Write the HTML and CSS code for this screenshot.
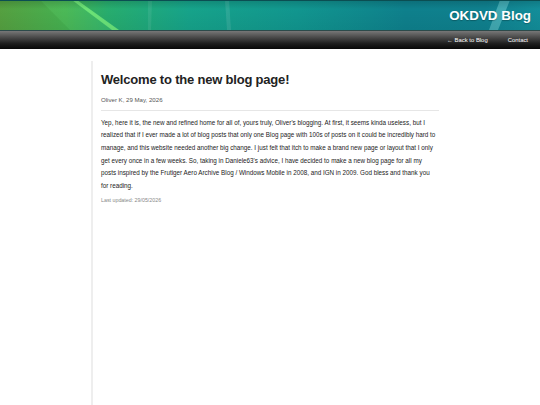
FILE: index.html
```html
<!DOCTYPE html>
<html lang="en">
<head>
    <meta charset="UTF-8">
    <meta name="viewport" content="width=device-width, initial-scale=1.0">
    <title>OKDVD Blog - Welcome to the new blog page!</title>
    <link rel="stylesheet" href="styles.css">
</head>
<body>
    <header class="masthead">
        <svg class="masthead-bg" viewBox="0 0 540 30" preserveAspectRatio="none" aria-hidden="true">
            <defs>
                <linearGradient id="sky" x1="0" y1="0" x2="1" y2="0">
                    <stop offset="0" stop-color="#55a040"/>
                    <stop offset="0.12" stop-color="#45b050"/>
                    <stop offset="0.2" stop-color="#27ad6e"/>
                    <stop offset="0.35" stop-color="#16a38a"/>
                    <stop offset="0.55" stop-color="#11968f"/>
                    <stop offset="0.75" stop-color="#0e808c"/>
                    <stop offset="0.9" stop-color="#0f808e"/>
                    <stop offset="1" stop-color="#138e9a"/>
                </linearGradient>
                <linearGradient id="shade" x1="0" y1="0" x2="0" y2="1">
                    <stop offset="0" stop-color="#000" stop-opacity="0.15"/>
                    <stop offset="0.3" stop-color="#000" stop-opacity="0"/>
                    <stop offset="1" stop-color="#000" stop-opacity="0.05"/>
                </linearGradient>
            </defs>
            <rect width="540" height="30" fill="url(#sky)"/>
            <polygon points="40,0 74,0 118,30 70,30" fill="#5fd26a" opacity="0.25"/>
            <polygon points="72,0 77,0 119,30 112,30" fill="#7cf27e" opacity="0.75"/>
            <polygon points="148,0 152,0 151,30 148,30" fill="#ffffff" opacity="0.08"/>
            <polygon points="225,0 229,0 231,30 227,30" fill="#ffffff" opacity="0.1"/>
            <polygon points="500,0 510,0 498,30 489,30" fill="#9ef0f0" opacity="0.35"/>
            <rect width="540" height="30" fill="url(#shade)"/>
            <rect width="540" height="1" fill="#0b4e52"/>
        </svg>
        <h1 class="site-title">OKDVD Blog</h1>
    </header>

    <nav class="topnav">
        <a href="#">&larr; Back to Blog</a>
        <a href="#">Contact</a>
    </nav>

    <main class="post">
        <h2 class="post-title">Welcome to the new blog page!</h2>
        <p class="post-meta">Oliver K, 29 May, 2026</p>
        <p class="post-body">Yep, here it is, the new and refined home for all of, yours truly, Oliver's blogging. At first, it seems kinda useless, but I realized that if I ever made a lot of blog posts that only one Blog page with 100s of posts on it could be incredibly hard to manage, and this website needed another big change. I just felt that itch to make a brand new page or layout that I only get every once in a few weeks. So, taking in Daniele63's advice, I have decided to make a new blog page for all my posts inspired by the Frutiger Aero Archive Blog / Windows Mobile in 2008, and IGN in 2009. God bless and thank you for reading.</p>
        <p class="post-updated">Last updated: 29/05/2026</p>
    </main>
</body>
</html>
```

FILE: styles.css
```css
* {
    margin: 0;
    padding: 0;
    box-sizing: border-box;
}

html, body {
    height: 100%;
}

body {
    font-family: 'Liberation Sans', Arial, Helvetica, sans-serif;
    background: #fff;
    color: #222;
    display: flex;
    flex-direction: column;
}

.masthead {
    position: relative;
    height: 30px;
    display: flex;
    justify-content: flex-end;
    align-items: center;
    padding-right: 9px;
    overflow: hidden;
}

.masthead-bg {
    position: absolute;
    top: 0;
    left: 0;
    width: 100%;
    height: 100%;
}

.site-title {
    position: relative;
    color: #fff;
    font-size: 13.4px;
    font-weight: bold;
    text-shadow: 0 1px 1px rgba(0, 0, 0, 0.25);
}

.topnav {
    height: 19px;
    background: linear-gradient(#777 0%, #4a4a4a 35%, #1e1e1e 70%, #080808 100%);
    border-top: 1px solid #2c4a4a;
    display: flex;
    justify-content: flex-end;
    align-items: center;
    gap: 20px;
    padding-right: 12px;
}

.topnav a {
    color: #fff;
    text-decoration: none;
    font-size: 5.9px;
}

.post {
    flex: 1;
    width: 358px;
    margin: 12px auto 0;
    border-left: 2px solid #eee;
    padding: 0 12px 0 8px;
}

.post-title {
    font-size: 13px;
    letter-spacing: -0.2px;
    font-weight: bold;
    color: #222;
    margin-top: 10px;
    line-height: 18px;
}

.post-meta {
    font-size: 6.1px;
    color: #555;
    margin-top: 7px;
    padding-bottom: 6.5px;
    border-bottom: 1px solid #e6e6e6;
    margin-right: -2px;
}

.post-body {
    font-size: 6.3px;
    line-height: 12.7px;
    margin-top: 6px;
    color: #222;
}

.post-updated {
    font-size: 5.3px;
    color: #888;
    margin-top: 4px;
}
```
